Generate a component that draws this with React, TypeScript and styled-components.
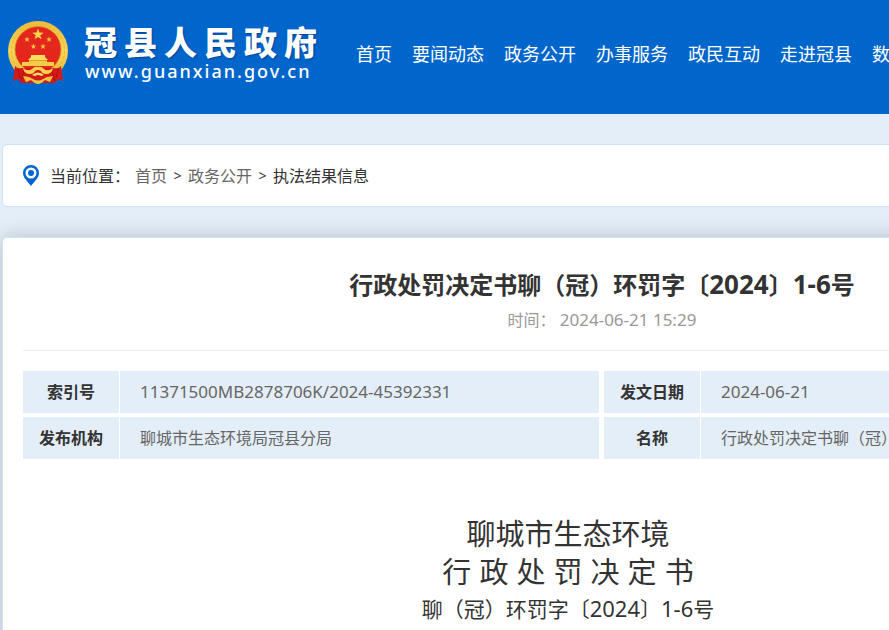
import React from "react";
import styled, { createGlobalStyle } from "styled-components";

const GlobalStyle = createGlobalStyle`
  * { box-sizing: border-box; }
  html { scrollbar-width: none; }
  body {
    margin: 0;
    background: #e4eef8;
    color: #333;
    font-family: "Noto Sans", "Noto Sans CJK SC", sans-serif;
    font-size: 16px;
    line-height: 24px;
  }
  h1, h2, p { margin: 0; font-weight: 400; }
  a { color: inherit; text-decoration: none; }
  a:hover { text-decoration: underline; }
`;

const Page = styled.div`
  min-width: 1204px;
`;

const Container = styled.div`
  max-width: 1200px;
  margin: 0 auto;
`;

const Header = styled.header`
  background: #0066cc;
  color: #fff;
`;

const HeaderInner = styled(Container)`
  display: flex;
  align-items: center;
  height: 114px;
  padding: 0 0 8px 5px;
`;

const Brand = styled.a`
  display: flex;
  align-items: center;
  gap: 15px;
  width: 349px;
  &:hover { text-decoration: none; }
`;

const Emblem = styled.svg`
  width: 62px;
  height: 66px;
  flex: none;
`;

const BrandText = styled.span`
  display: flex;
  flex-direction: column;
`;

const BrandName = styled.span`
  display: flex;
  gap: 7px;
  font-size: 33px;
  font-weight: 900;
  line-height: 36px;
  text-shadow: 1px 1px 2px rgba(0, 30, 90, 0.5);
`;

const BrandDomain = styled.span`
  padding-left: 1px;
  font-size: 18px;
  font-weight: 500;
  line-height: 20px;
  letter-spacing: 2px;
`;

const Nav = styled.nav`
  display: flex;
  flex: 1;
  gap: 20px;
  padding-top: 2px;
  font-size: 18px;
  line-height: 28px;
  white-space: nowrap;
`;

const Breadcrumb = styled.nav`
  display: flex;
  align-items: center;
  height: 63px;
  margin: 30px 0;
  padding: 0 20px;
  background: #fff;
  border: 1px solid #cfe3f8;
  border-radius: 5px;
`;

const Pin = styled.svg`
  width: 16px;
  height: 21px;
  margin-right: 11px;
`;

const CrumbLabel = styled.span`
  margin-right: 5px;
`;

const CrumbLink = styled.a`
  color: #666;
`;

const Separator = styled.span`
  width: 21px;
  font-size: 14px;
  text-align: center;
`;

const Card = styled.main`
  min-height: 460px;
  padding: 28px 20px 60px;
  background: #fff;
  border: 1px solid #cfe3f8;
  border-radius: 5px;
  box-shadow: 0 0 20px rgba(0, 0, 0, 0.2);
`;

const Title = styled.h1`
  font-size: 24px;
  font-weight: 700;
  line-height: 36px;
  text-align: center;
`;

const Meta = styled.p`
  padding: 3px 0 16px;
  margin-bottom: 20px;
  border-bottom: 1px solid #eee;
  color: #999;
  line-height: 28px;
  text-align: center;
`;

const Latin = styled.span<{ $size: number }>`
  font-size: ${({ $size }) => $size}px;
`;

const InfoTable = styled.table`
  width: 100%;
  border-spacing: 0;
  table-layout: fixed;
`;

const LabelCol = styled.col`
  width: 97px;
`;

const ValueCol = styled.col<{ $width?: number }>`
  width: ${({ $width }) => ($width ? `${$width}px` : "auto")};
`;

const InfoLabel = styled.th`
  height: 46px;
  padding: 0;
  background: #e4eef8;
  background-clip: padding-box;
  border-right: 1px solid #fff;
  border-bottom: 4px solid #fff;
  font-weight: 700;
  text-align: center;
`;

const InfoValue = styled.td`
  height: 46px;
  padding: 0 20px;
  background: #e4eef8;
  background-clip: padding-box;
  border-right: 5px solid #fff;
  border-bottom: 4px solid #fff;
  color: #666;
  overflow: hidden;
  white-space: nowrap;
  &:last-child { border-right: 0; }
`;

const Article = styled.article`
  padding: 53px 68px 0 0;
  text-align: center;
`;

const DocHeading = styled.h2`
  font-family: "Liberation Sans", "Noto Sans CJK SC", sans-serif;
  font-size: 29px;
  line-height: 38px;
`;

const DocNumber = styled.p`
  font-size: 21px;
  line-height: 32px;
`;

const navItems = ["首页", "要闻动态", "政务公开", "办事服务", "政民互动", "走进冠县", "数据开放"];

const starPoints = (cx: number, cy: number, r: number) =>
  Array.from({ length: 10 }, (_, i) => {
    const angle = -Math.PI / 2 + (i * Math.PI) / 5;
    const radius = i % 2 ? r * 0.4 : r;
    return `${(cx + radius * Math.cos(angle)).toFixed(2)},${(cy + radius * Math.sin(angle)).toFixed(2)}`;
  }).join(" ");

function NationalEmblem() {
  return (
    <Emblem viewBox="0 0 62 66" aria-hidden="true">
      <defs>
        <linearGradient id="gold" x1="0" y1="0" x2="0" y2="1">
          <stop offset="0" stopColor="#eebc38" />
          <stop offset="0.5" stopColor="#f6d455" />
          <stop offset="1" stopColor="#eab233" />
        </linearGradient>
      </defs>
      <ellipse cx="31" cy="31" rx="30" ry="30" fill="url(#gold)" />
      <ellipse cx="31" cy="31" rx="26.500" ry="26.500" fill="none" stroke="#e6b03a" strokeWidth="0.800" strokeDasharray="3 2" />
      <circle cx="31" cy="29.500" r="23" fill="#e4261d" stroke="#d78b1c" strokeWidth="0.800" />
      <polygon points={starPoints(31, 14.5, 6)} fill="#f9d84c" />
      <polygon points={starPoints(20, 19.5, 3)} fill="#f5c83e" />
      <polygon points={starPoints(42, 19.5, 3)} fill="#f5c83e" />
      <polygon points={starPoints(26.5, 26.5, 3)} fill="#f5c83e" />
      <polygon points={starPoints(36, 26.5, 3)} fill="#f5c83e" />
      <path d="M24 35 H38 V37 L41 40 H21 L24 37 Z" fill="#f8dc5c" />
      <path d="M22 40 H40 V42 H47 V46 H15 V42 H22 Z" fill="#f4cc48" />
      <path d="M22 40.500 H40" stroke="#d98a1e" strokeWidth="0.700" />
      <path d="M8 46 Q10 49 15 48 L47 48 Q52 49 54 46 L56 61 L51 59 L48 63 H14 L11 59 L6 61 Z" fill="#d41a18" />
      <path d="M11 49 L13 58 M17 50 L14 61 M51 49 L49 58 M45 50 L48 61" stroke="#a80f12" strokeWidth="0.900" />
      <path d="M16 48 Q21 52 25 49 Q28 46 31 47 Q34 46 37 49 Q41 52 46 48 Q45 54 39 54 Q35 54 34 51 Q31 49 28 51 Q27 54 23 54 Q17 54 16 48 Z" fill="#f7d14a" />
      <path d="M25 55 Q31 50 37 55 L34 56 Q31 54 28 56 Z" fill="#fae071" />
      <path d="M16 56 L22 57 L26 59 Q31 62 36 59 L40 57 L46 56 L43 62 L38 60 Q34 64 31 64 Q28 64 24 60 L19 62 Z" fill="#f4c43c" />
    </Emblem>
  );
}

export default function App() {
  return (
    <>
      <GlobalStyle />
      <Page>
        <Header>
          <HeaderInner>
            <Brand href="#home" aria-label="冠县人民政府">
              <NationalEmblem />
              <BrandText>
                <BrandName>
                  {[..."冠县人民政府"].map((char) => (
                    <span key={char}>{char}</span>
                  ))}
                </BrandName>
                <BrandDomain>www.guanxian.gov.cn</BrandDomain>
              </BrandText>
            </Brand>
            <Nav aria-label="主导航">
              {navItems.map((item) => (
                <a key={item} href={`#${item}`}>{item}</a>
              ))}
            </Nav>
          </HeaderInner>
        </Header>

        <Container>
          <Breadcrumb aria-label="当前位置">
            <Pin viewBox="0 0 16 21" aria-hidden="true">
              <path
                fill="#0066cc"
                fillRule="evenodd"
                d="M8 0a8 8 0 0 1 8 8c0 4.600-4.500 8.500-8 13C4.500 16.500 0 12.600 0 8a8 8 0 0 1 8-8Zm0 2.500a5.500 5.500 0 1 0 0 11a5.500 5.500 0 0 0 0-11Z"
              />
              <circle cx="8" cy="8" r="3" fill="#0066cc" />
            </Pin>
            <CrumbLabel>当前位置：</CrumbLabel>
            <CrumbLink href="#home">首页</CrumbLink>
            <Separator>&gt;</Separator>
            <CrumbLink href="#affairs">政务公开</CrumbLink>
            <Separator>&gt;</Separator>
            <span>执法结果信息</span>
          </Breadcrumb>

          <Card>
            <Title>
              行政处罚决定书聊（冠）环罚字〔<Latin $size={26}>2024</Latin>〕<Latin $size={26}>1-6</Latin>号
            </Title>
            <Meta>
              时间： <Latin $size={17}>2024-06-21 15:29</Latin>
            </Meta>
            <InfoTable>
              <colgroup>
                <LabelCol />
                <ValueCol $width={484} />
                <LabelCol />
                <ValueCol />
              </colgroup>
              <tbody>
                <tr>
                  <InfoLabel scope="row">索引号</InfoLabel>
                  <InfoValue><Latin $size={17}>11371500MB2878706K/2024-45392331</Latin></InfoValue>
                  <InfoLabel scope="row">发文日期</InfoLabel>
                  <InfoValue><Latin $size={17}>2024-06-21</Latin></InfoValue>
                </tr>
                <tr>
                  <InfoLabel scope="row">发布机构</InfoLabel>
                  <InfoValue>聊城市生态环境局冠县分局</InfoValue>
                  <InfoLabel scope="row">名称</InfoLabel>
                  <InfoValue>
                    行政处罚决定书聊（冠）环罚字〔<Latin $size={17}>2024</Latin>〕<Latin $size={17}>1-6</Latin>号
                  </InfoValue>
                </tr>
              </tbody>
            </InfoTable>
            <Article>
              <DocHeading>聊城市生态环境</DocHeading>
              <DocHeading>行 政 处 罚 决 定 书</DocHeading>
              <DocNumber>
                聊（冠）环罚字〔<Latin $size={22}>2024</Latin>〕<Latin $size={22}>1-6</Latin>号
              </DocNumber>
            </Article>
          </Card>
        </Container>
      </Page>
    </>
  );
}
